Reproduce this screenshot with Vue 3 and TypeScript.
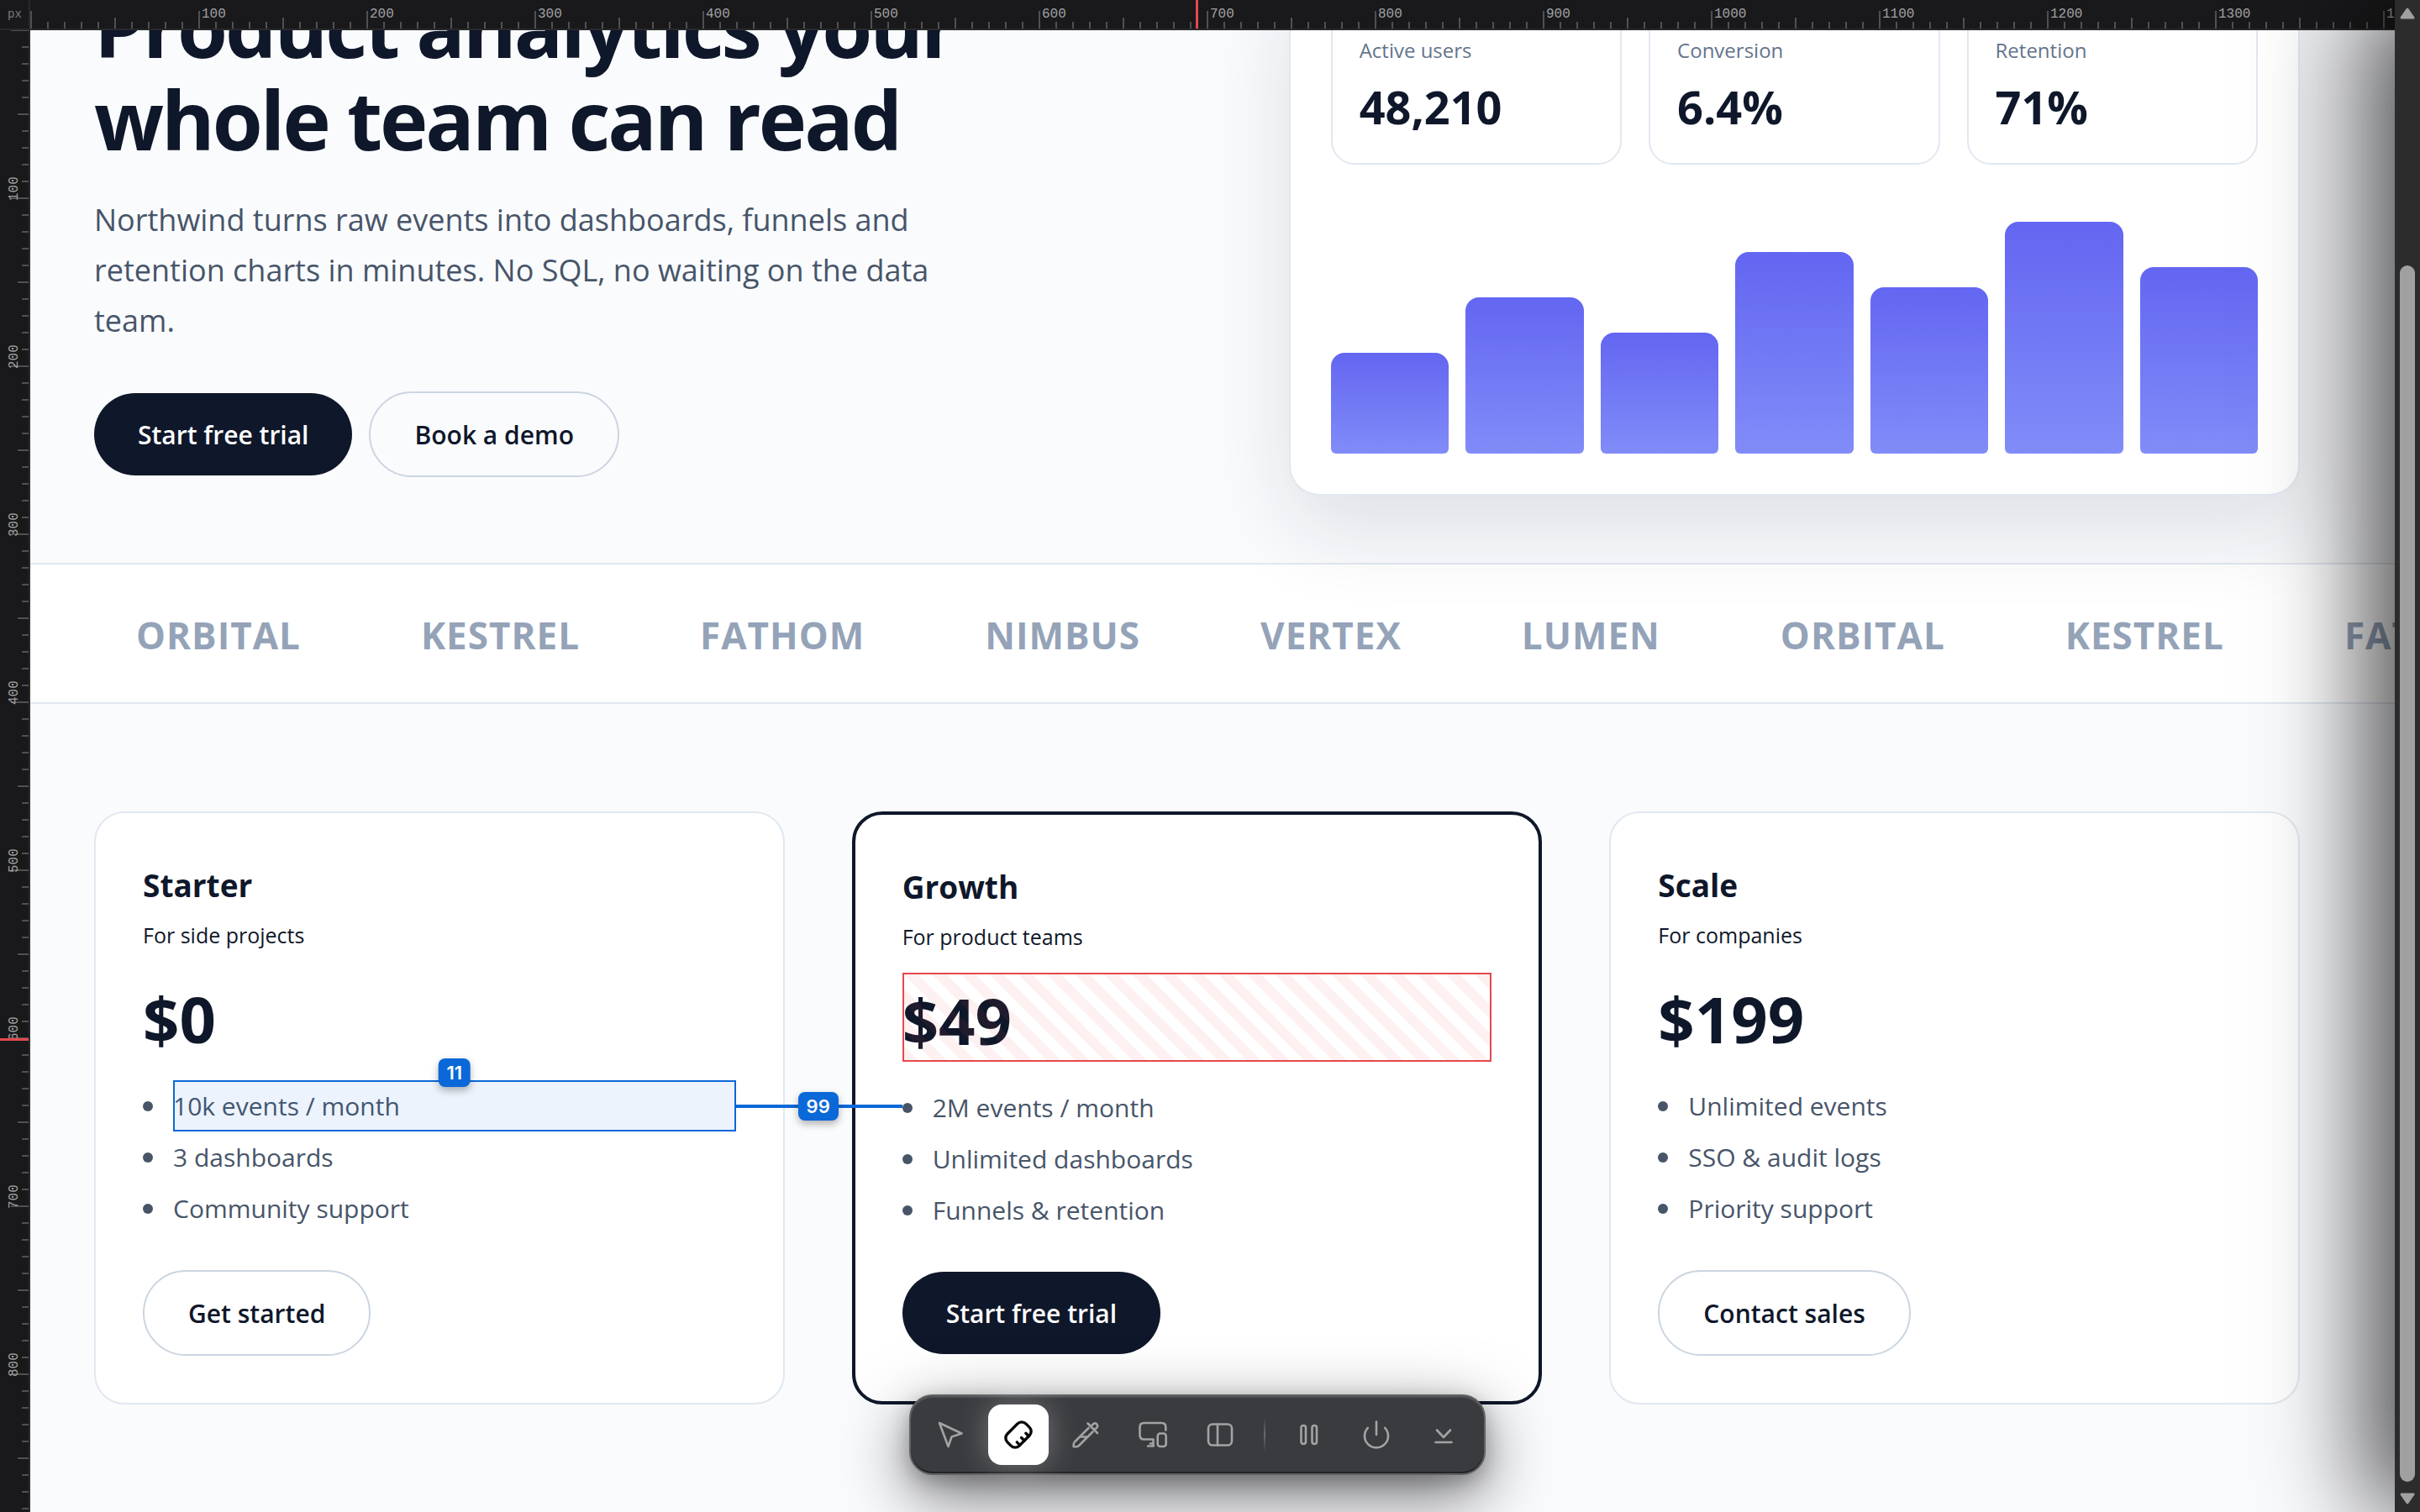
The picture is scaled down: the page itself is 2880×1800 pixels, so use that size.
<script setup lang="ts">
import { ref, onMounted, onBeforeUnmount } from 'vue'

interface Tick { pos: number; start: number; label: string }
interface Plan {
  name: string
  audience: string
  price: string
  features: string[]
  action: string
  featured?: boolean
}

// One CSS pixel of the inspected page is two ruler pixels; ticks come every ten units.
function makeTicks(length: number): Tick[] {
  return Array.from({ length: Math.ceil(length / 20) }, (_, i) => ({
    pos: i * 20,
    start: i % 10 === 0 ? 13 : i % 5 === 0 ? 21 : 26,
    label: i > 0 && i % 10 === 0 ? String(i * 10) : ''
  }))
}

const columnTicks = ref<Tick[]>([])
const rowTicks = ref<Tick[]>([])

function measure() {
  columnTicks.value = makeTicks(window.innerWidth - 66)
  rowTicks.value = makeTicks(window.innerHeight - 36)
}

measure()
onMounted(() => window.addEventListener('resize', measure))
onBeforeUnmount(() => window.removeEventListener('resize', measure))

const stats = [
  { label: 'Active users', value: '48,210' },
  { label: 'Conversion', value: '6.4%' },
  { label: 'Retention', value: '71%' }
]
const bars = [40, 62, 48, 80, 66, 92, 74]
const logos = ['ORBITAL', 'KESTREL', 'FATHOM', 'NIMBUS', 'VERTEX', 'LUMEN', 'ORBITAL', 'KESTREL', 'FATHOM']
const plans: Plan[] = [
  { name: 'Starter', audience: 'For side projects', price: '$0', features: ['10k events / month', '3 dashboards', 'Community support'], action: 'Get started' },
  { name: 'Growth', audience: 'For product teams', price: '$49', features: ['2M events / month', 'Unlimited dashboards', 'Funnels & retention'], action: 'Start free trial', featured: true },
  { name: 'Scale', audience: 'For companies', price: '$199', features: ['Unlimited events', 'SSO & audit logs', 'Priority support'], action: 'Contact sales' }
]
</script>

<template>
  <div class="window">
    <div class="viewport">
      <div class="corner">px</div>
      <svg class="ruler ruler-x" aria-label="Horizontal ruler">
        <g v-for="t in columnTicks" :key="t.pos">
          <rect class="tick" :x="t.pos" :y="t.start" width="2" :height="34 - t.start" />
          <text v-if="t.label" class="mark" :x="t.pos + 4" y="21">{{ t.label }}</text>
        </g>
        <rect class="cursor-mark" x="1387" y="0" width="3" height="34" />
      </svg>
      <svg class="ruler ruler-y" aria-label="Vertical ruler">
        <g v-for="t in rowTicks" :key="t.pos">
          <rect class="tick" :x="t.start" :y="t.pos - 1" :width="34 - t.start" height="2" />
          <text v-if="t.label" class="mark" :transform="`translate(21 ${t.pos + 3}) rotate(-90)`">{{ t.label }}</text>
        </g>
        <rect class="cursor-mark" x="0" y="1200" width="34" height="3" />
      </svg>

      <main class="page">
        <section class="hero">
          <div class="pitch">
            <h1>Product analytics your<br />whole team can read</h1>
            <p>Northwind turns raw events into dashboards, funnels and retention charts in minutes. No SQL, no waiting on the data team.</p>
            <div class="actions">
              <button type="button" class="btn solid">Start free trial</button>
              <button type="button" class="btn outline">Book a demo</button>
            </div>
          </div>
          <div class="board">
            <div class="stats">
              <div v-for="s in stats" :key="s.label" class="stat">
                <div class="stat-label">{{ s.label }}</div>
                <div class="stat-value">{{ s.value }}</div>
              </div>
            </div>
            <div class="chart">
              <div v-for="(b, i) in bars" :key="i" class="bar" :style="{ height: b + '%' }"></div>
            </div>
          </div>
        </section>

        <section class="logos">
          <span v-for="(l, i) in logos" :key="i">{{ l }}</span>
        </section>

        <section class="plans">
          <article v-for="(p, pi) in plans" :key="p.name" class="plan" :class="{ featured: p.featured }">
            <h2>{{ p.name }}</h2>
            <p class="audience">{{ p.audience }}</p>
            <div class="price">
              {{ p.price }}
              <div v-if="p.featured" class="hatch"></div>
            </div>
            <ul>
              <li v-for="(f, fi) in p.features" :key="f">
                <span class="feature">
                  {{ f }}
                  <span v-if="pi === 0 && fi === 0" class="selection">
                    <span class="badge above">11</span>
                    <span class="distance"><span class="badge">99</span></span>
                  </span>
                </span>
              </li>
            </ul>
            <button type="button" class="btn" :class="p.featured ? 'solid' : 'outline'">{{ p.action }}</button>
          </article>
        </section>
      </main>

      <div class="side-shade"></div>

      <div class="toolbar" role="toolbar" aria-label="Inspector tools">
        <button type="button" aria-label="Select">
          <svg viewBox="0 0 40 40"><path d="M6 6L32.5 18.5L20.5 22.5L16.5 34Z" /></svg>
        </button>
        <button type="button" class="active" aria-label="Measure">
          <svg viewBox="0 0 40 40"><g transform="rotate(-45 20 20)"><rect x="4.5" y="10" width="31" height="20" rx="7" /><path d="M12.5 30v-5M20 30v-5M27.5 30v-5" /></g></svg>
        </button>
        <button type="button" aria-label="Pick colour">
          <svg viewBox="0 0 40 40"><path d="M23.5 12L7 28.5Q5.7 30 5.7 31.5V34.3H9Q10.5 34.3 12 33L28.5 16.5M13.5 22.5H22.5M22.5 6.5L34 18M26.5 10L28.5 7.7C32 4.5 36 8.5 33 12L30.5 14" /></svg>
        </button>
        <button type="button" aria-label="Devices">
          <svg viewBox="0 0 40 40"><path d="M35.3 14.5V11Q35.3 6 30.3 6H9.5Q4.5 6 4.5 11V20.5Q4.5 25.5 9.5 25.5H20.5V33.5M14 33.5H21M17 30.5H20.5" /><rect x="25.7" y="18.5" width="10" height="15.5" rx="3" /></svg>
        </button>
        <button type="button" aria-label="Panel">
          <svg viewBox="0 0 40 40"><rect x="6" y="7.5" width="28" height="25" rx="5" /><path d="M17 7.5v25" /></svg>
        </button>
        <span class="divider"></span>
        <button type="button" aria-label="Pause">
          <svg viewBox="0 0 40 40"><rect x="10.5" y="9" width="5.5" height="22" rx="2.7" /><rect x="23.5" y="9" width="5.5" height="22" rx="2.7" /></svg>
        </button>
        <button type="button" aria-label="Turn off">
          <svg viewBox="0 0 40 40"><path d="M20 4.5V20M9.8 11.8A14 14 0 1 0 30.2 11.8" /></svg>
        </button>
        <button type="button" aria-label="Collapse">
          <svg viewBox="0 0 40 40"><path d="M12 14.5L20 23L28 14.5M10.5 29H29.5" /></svg>
        </button>
      </div>
    </div>

    <div class="scrollbar" aria-hidden="true">
      <svg viewBox="0 0 30 16"><path d="M15 3L22 13H8Z" /></svg>
      <div class="track"><div class="thumb"></div></div>
      <svg viewBox="0 0 30 16"><path d="M15 13L22 3H8Z" /></svg>
    </div>
  </div>
</template>

<style>
html,
body {
  background: #fafbfd;
  overflow: hidden;
}
</style>

<style scoped>
.window {
  display: grid;
  grid-template-columns: minmax(0, 1fr) 30px;
  height: 100vh;
  overflow: hidden;
  font-family: "Open Sans", "Noto Sans", sans-serif;
  color: #0f172a;
}
.window * {
  box-sizing: border-box;
}
.viewport {
  position: relative;
  display: grid;
  grid-template: 36px minmax(0, 1fr) / 36px minmax(0, 1fr);
  min-height: 0;
  overflow: hidden;
}

/* rulers */
.corner,
.ruler {
  background: #19191b;
  font-family: "Liberation Mono", monospace;
}
.corner {
  border-right: 2px solid #29292b;
  border-bottom: 2px solid #29292b;
  padding-left: 9px;
  font-size: 14px;
  line-height: 34px;
  color: #7b7b7d;
}
.ruler {
  display: block;
  width: 100%;
  height: 100%;
  overflow: hidden;
}
.ruler-x {
  border-bottom: 2px solid #29292b;
}
.ruler-y {
  border-right: 2px solid #29292b;
}
.tick {
  fill: #505052;
}
.mark {
  fill: #a0a0a2;
  font-size: 16px;
}
.cursor-mark {
  fill: #e5484d;
}

/* page */
.page {
  min-width: 0;
  overflow: hidden;
  background: #fafbfd;
}
.hero {
  display: grid;
  grid-template-columns: 1.1fr 1fr;
  gap: 98px;
  align-items: end;
  margin-top: -160px;
  padding: 80px 113px 80px 76px;
}
.pitch {
  padding-bottom: 22px;
}
h1 {
  margin: 0 0 36px;
  font-size: 97px;
  font-weight: 700;
  line-height: 110px;
  letter-spacing: -3px;
}
.pitch p {
  max-width: 1040px;
  margin: 0 0 54px;
  font-size: 36px;
  line-height: 60px;
  color: #475569;
}
.actions {
  display: flex;
  align-items: center;
  gap: 20px;
}
.btn {
  padding: 29px 52px 27px;
  border: 0;
  border-radius: 60px;
  font: 600 30px/42px "Open Sans", "Noto Sans", sans-serif;
}
.solid {
  background: #0f172a;
  color: #ffffff;
}
.outline {
  border: 2px solid #cbd5e1;
  background: transparent;
  color: #0f172a;
}
.board {
  padding: 48px;
  border: 2px solid #e2e8f0;
  border-radius: 36px;
  background: #ffffff;
  box-shadow: 0 40px 100px rgba(15, 23, 42, 0.12);
}
.stats {
  display: grid;
  grid-template-columns: repeat(3, 1fr);
  gap: 32px;
  margin-bottom: 44px;
}
.stat {
  padding: 34px 32px 30px;
  border: 2px solid #e2e8f0;
  border-radius: 28px;
}
.stat-label {
  margin-bottom: 12px;
  font-size: 24px;
  line-height: 36px;
  color: #64748b;
}
.stat-value {
  font-size: 54px;
  font-weight: 700;
  line-height: 74px;
}
.chart {
  display: flex;
  align-items: flex-end;
  gap: 20px;
  height: 300px;
}
.bar {
  flex: 1;
  border-radius: 16px 16px 6px 6px;
  background: linear-gradient(#6366f1, #818cf8);
}

.logos {
  display: flex;
  gap: 143px;
  padding: 54px 0 50px 126px;
  border-top: 2px solid #e2e8f0;
  border-bottom: 2px solid #e2e8f0;
  overflow: hidden;
  background: #ffffff;
  font-size: 44px;
  font-weight: 700;
  line-height: 60px;
  letter-spacing: 1px;
  color: #94a3b8;
}

.plans {
  display: grid;
  grid-template-columns: repeat(3, 1fr);
  gap: 80px;
  padding: 128px 113px 128px 76px;
}
.plan {
  padding: 56px;
  border: 2px solid #e2e8f0;
  border-radius: 36px;
  background: #ffffff;
}
.featured {
  border: 4px solid #0f172a;
}
h2 {
  margin: 0 0 10px;
  font-size: 37px;
  line-height: 60px;
}
.audience {
  margin: 0 0 24px;
  font-size: 25px;
  line-height: 38px;
}
.price {
  position: relative;
  margin-bottom: 24px;
  padding-top: 8px;
  font-size: 76px;
  font-weight: 700;
  line-height: 98px;
}
.hatch {
  position: absolute;
  inset: 0;
  border: 2px solid #e5484d;
  background: repeating-linear-gradient(45deg, rgba(229, 72, 77, 0.08) 0 12px, transparent 12px 24px);
}
ul {
  margin: 0 0 43px;
  padding: 0;
  list-style: none;
  font-size: 30px;
  line-height: 61px;
  color: #475569;
}
li {
  display: flex;
  align-items: center;
  gap: 24px;
}
li::before {
  content: "";
  width: 12px;
  height: 12px;
  border-radius: 50%;
  background: #475569;
}
.feature {
  position: relative;
  flex: 1;
}
.selection {
  position: absolute;
  z-index: 2;
  inset: 0;
  border: 2px solid #0b68d8;
  background: rgba(11, 104, 216, 0.08);
}
.badge {
  position: relative;
  padding: 0 10px;
  border-radius: 8px;
  background: #0b68d8;
  box-shadow: 0 4px 10px rgba(0, 0, 0, 0.3);
  font: 600 22px/34px Inter, sans-serif;
  color: #ffffff;
}
.above {
  position: absolute;
  bottom: 100%;
  left: 50%;
  margin-bottom: -6px;
  transform: translateX(-50%);
}
.distance {
  position: absolute;
  top: 50%;
  left: 100%;
  display: flex;
  align-items: center;
  justify-content: center;
  width: 200px;
  height: 4px;
  margin-top: -2px;
  background: #0b68d8;
}

/* shadow thrown by the closed drawer past the right edge */
.side-shade {
  position: absolute;
  z-index: 3;
  top: 0;
  bottom: 0;
  left: 100%;
  width: 400px;
  box-shadow: -36px 0 112px rgba(0, 0, 0, 0.68);
}

.toolbar {
  position: absolute;
  z-index: 4;
  bottom: 44px;
  left: 50%;
  display: flex;
  align-items: center;
  gap: 8px;
  padding: 10px 12px;
  border: 2px solid #626365;
  border-radius: 28px;
  background: #3a3b3e;
  box-shadow:
    inset 0 2px 0 #505153,
    inset 0 -2px 0 #232326,
    0 8px 24px rgba(0, 0, 0, 0.25),
    0 24px 80px rgba(0, 0, 0, 0.55);
  transform: translateX(-50%);
}
.toolbar button {
  display: flex;
  align-items: center;
  justify-content: center;
  width: 72px;
  height: 72px;
  padding: 0;
  border: 0;
  border-radius: 16px;
  background: transparent;
  color: #a2a3a5;
}
.toolbar .active {
  background: #ffffff;
  box-shadow: 0 0 36px rgba(255, 255, 255, 0.3);
  color: #09090b;
}
.toolbar svg {
  width: 40px;
  height: 40px;
  fill: none;
  stroke: currentColor;
  stroke-width: 2.6;
  stroke-linecap: round;
  stroke-linejoin: round;
}
.toolbar .active svg {
  stroke-width: 3.4;
}
.divider {
  width: 2px;
  height: 40px;
  margin: 0 8px;
  background: linear-gradient(transparent, #6b6c6f, transparent);
}

.scrollbar {
  display: flex;
  flex-direction: column;
  align-items: center;
  padding: 8px 0;
  background: #2c2c2c;
}
.scrollbar svg {
  width: 30px;
  height: 16px;
  fill: #a0a0a0;
  stroke: #a0a0a0;
  stroke-width: 3;
  stroke-linejoin: round;
}
.track {
  flex: 1;
  display: flex;
  justify-content: center;
  align-items: flex-end;
  width: 100%;
  padding-bottom: 12px;
}
.thumb {
  width: 18px;
  height: calc(100% - 292px);
  border-radius: 9px;
  background: #a0a0a0;
}
</style>
